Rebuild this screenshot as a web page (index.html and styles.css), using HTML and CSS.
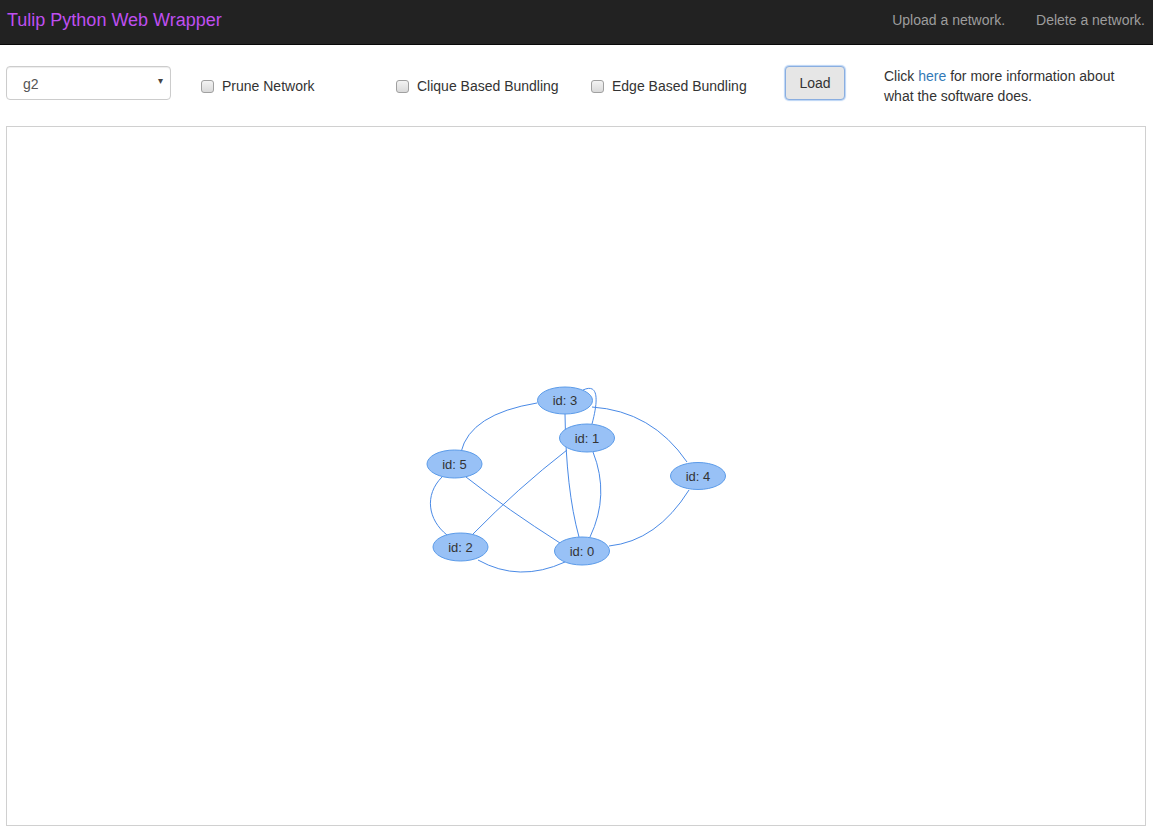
FILE: index.html
```html
<!DOCTYPE html>
<html>
<head>
<meta charset="utf-8">
<title>Tulip Python Web Wrapper</title>
<link rel="stylesheet" href="styles.css">
</head>
<body>
<nav class="navbar">
  <a class="brand" href="#">Tulip Python Web Wrapper</a>
  <ul class="nav-links">
    <li><a href="#">Upload a network.</a></li>
    <li><a href="#">Delete a network.</a></li>
  </ul>
</nav>
<div class="controls">
  <div class="col">
    <div class="select"><span class="select-value">g2</span><span class="caret">&#9662;</span></div>
  </div>
  <div class="col">
    <label class="check"><input type="checkbox"><span>Prune Network</span></label>
  </div>
  <div class="col">
    <label class="check"><input type="checkbox"><span>Clique Based Bundling</span></label>
  </div>
  <div class="col">
    <label class="check"><input type="checkbox"><span>Edge Based Bundling</span></label>
  </div>
  <div class="col">
    <button class="btn-load">Load</button>
  </div>
  <div class="col info">
    <p class="info-text">Click <a href="#">here</a> for more information about what the software does.</p>
  </div>
</div>
<div class="canvas">
  <svg class="graph" width="1138" height="698" viewBox="7 127 1138 698">
    <g class="edges" fill="none" stroke="#4a8ae6" stroke-width="1">
      <path d="M537,403 Q470,414 461,452"/>
      <path d="M565,414 Q566,490 579,537"/>
      <path d="M583,390 C596,384 600,394 592,424"/>
      <path d="M592,407 Q652,411 687,462"/>
      <path d="M567,450 Q518,488 472,535"/>
      <path d="M593,452 Q610,495 590,537"/>
      <path d="M466,477 Q508,510 560,543"/>
      <path d="M442,477 C424,495 428,520 447,535"/>
      <path d="M478,560 Q519,583 565,562"/>
      <path d="M689,490 Q657,541 609,546"/>
    </g>
    <g class="nodes" fill="#98c1f6" stroke="#5b9be9" stroke-width="1">
      <ellipse cx="565" cy="400.5" rx="27.5" ry="13.5"/>
      <ellipse cx="587" cy="438" rx="27.5" ry="14"/>
      <ellipse cx="454.5" cy="464" rx="27.5" ry="14"/>
      <ellipse cx="698" cy="476" rx="27.5" ry="13.5"/>
      <ellipse cx="460.5" cy="547" rx="27.5" ry="14"/>
      <ellipse cx="582" cy="551" rx="27.5" ry="14"/>
    </g>
    <g class="labels">
      <text x="565" y="405">id: 3</text>
      <text x="587" y="442.5">id: 1</text>
      <text x="454.5" y="468.5">id: 5</text>
      <text x="698" y="480.5">id: 4</text>
      <text x="460.5" y="551.5">id: 2</text>
      <text x="582" y="555.5">id: 0</text>
    </g>
  </svg>
</div>
</body>
</html>
```
FILE: styles.css
```css
* { box-sizing: border-box; }
html, body {
  margin: 0;
  padding: 0;
  background: #fff;
  font-family: "Liberation Sans", Arial, Helvetica, sans-serif;
  font-size: 14px;
  line-height: 20px;
  color: #333;
}
.navbar {
  height: 45px;
  background: #222;
  border-bottom: 1px solid #080808;
  display: flex;
  align-items: flex-start;
  justify-content: space-between;
  padding: 10px 8px 0 7px;
}
.brand {
  color: #bf4ff0;
  font-size: 18px;
  line-height: 20px;
  text-decoration: none;
}
.nav-links {
  list-style: none;
  margin: 0;
  padding: 0;
  display: flex;
  gap: 31px;
}
.nav-links a {
  color: #9d9d9d;
  text-decoration: none;
  font-size: 14px;
  line-height: 20px;
}
.controls {
  display: grid;
  grid-template-columns: 195px 195px 195px 194px 99px 1fr;
  padding: 21px 0 0 6px;
  height: 81px;
}
.col { display: flex; align-items: flex-start; }
.select {
  width: 165px;
  height: 34px;
  border: 1px solid #ccc;
  border-radius: 4px;
  background: #fff;
  display: flex;
  align-items: center;
  justify-content: space-between;
  padding: 0 7px 0 16px;
  color: #555;
  box-shadow: inset 0 1px 1px rgba(0,0,0,0.075);
}
.select-value { position: relative; top: 1px; }
.caret { font-size: 10px; color: #444; position: relative; top: -2px; }
.check {
  display: flex;
  align-items: center;
  gap: 8px;
  margin-top: 10px;
  color: #333;
  cursor: pointer;
}
.check input {
  -webkit-appearance: none;
  appearance: none;
  margin: 0;
  width: 13px;
  height: 13px;
  border: 1px solid #a0a0a0;
  border-radius: 3px;
  background: linear-gradient(#f3f3f3, #d9d9d9);
}
.btn-load {
  width: 60px;
  height: 34px;
  font-family: inherit;
  font-size: 14px;
  color: #333;
  background: #e6e6e6;
  border: 1px solid #8aaee0;
  border-radius: 4px;
  box-shadow: 0 0 1px 1px rgba(102,160,233,0.45);
  padding: 0;
  line-height: 30px;
}
.info { display: block; padding-right: 20px; }
.info-text {
  margin: 0;
  font-size: 14px;
  line-height: 20px;
}
.info a { color: #337ab7; text-decoration: none; }
.canvas {
  margin-left: 6px;
  width: 1140px;
  height: 700px;
  border: 1px solid #d0d0d0;
}
.graph { display: block; }
.labels text {
  font-family: "Liberation Sans", Arial, sans-serif;
  font-size: 13px;
  fill: #333;
  text-anchor: middle;
}
```
